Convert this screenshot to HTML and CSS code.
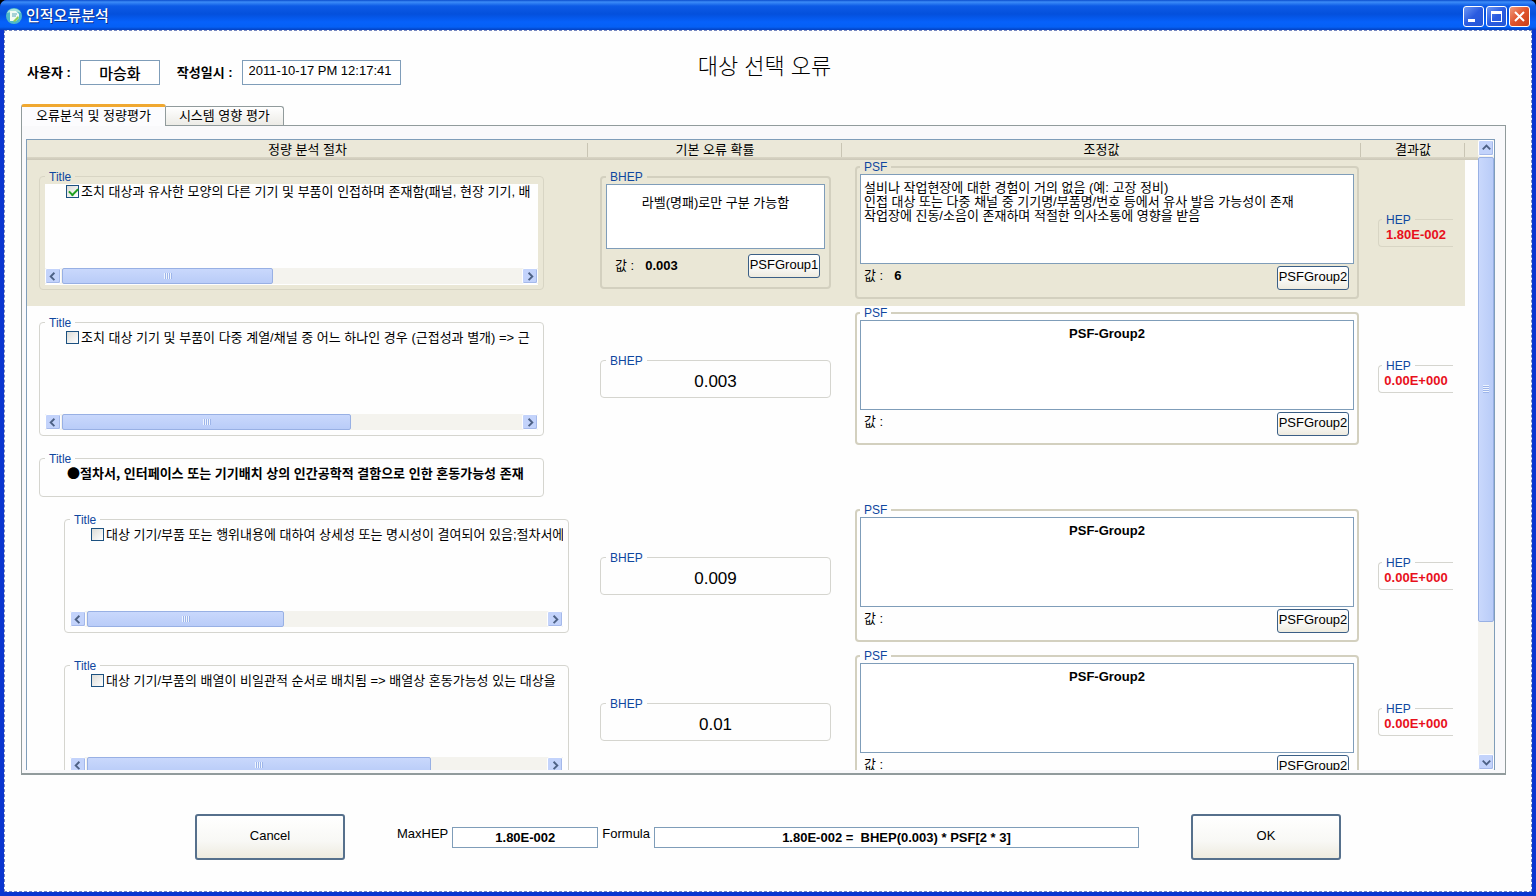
FILE: index.html
```html
<!DOCTYPE html>
<html lang="ko">
<head>
<meta charset="utf-8">
<title>인적오류분석</title>
<link rel="stylesheet" href="styles.css">
</head>
<body>
<div class="window">
  <header class="titlebar">
    <svg class="app-icon" viewBox="0 0 16 16" aria-hidden="true">
      <circle cx="8" cy="8" r="8" fill="#4fb9c9"/>
      <path d="M1 5a8 8 0 0 1 14 0l-6-2z" fill="#a9e3dc"/>
      <path d="M4 3h6l3 3v4l-3 3H4z" fill="#f2fbf4"/>
      <path d="M6 6h5M6 8h4" stroke="#5aa9b8" fill="none"/>
      <path d="M7 13l5-5 1 2-4 4z" fill="#8fcf5a"/>
    </svg>
    <h1 class="titlebar-text">인적오류분석</h1>
    <button class="win-button" aria-label="최소화"><svg viewBox="0 0 19 19"><path d="M4 12h7v3H4z" fill="#fff"/></svg></button>
    <button class="win-button" aria-label="최대화"><svg viewBox="0 0 19 19"><path d="M4 4h11v11H4zM5 7v7h9V7z" fill="#fff" fill-rule="evenodd"/></svg></button>
    <button class="win-button win-close" aria-label="닫기"><svg viewBox="0 0 19 19"><path d="M5 5l9 9M14 5l-9 9" stroke="#fff" stroke-width="2" fill="none"/></svg></button>
  </header>
  <main class="client">
    <div class="info">
      <div class="info-fields">
        <label for="user">사용자 :</label>
        <input id="user" class="box user" value="마승화">
        <label for="date" class="date-label">작성일시 :</label>
        <input id="date" class="box date" value="2011-10-17 PM 12:17:41">
      </div>
      <h2 class="heading">대상 선택 오류</h2>
    </div>
    <div class="tabs" role="tablist">
      <button class="tab tab-active" role="tab" aria-selected="true">오류분석 및 정량평가</button>
      <button class="tab" role="tab" aria-selected="false">시스템 영향 평가</button>
    </div>
    <section class="panel">
      <div class="list">
        <div class="list-view">
          <table class="grid">
            <colgroup><col class="col-title"><col class="col-bhep"><col><col class="col-hep"><col class="col-rest"></colgroup>
            <thead>
              <tr><th>정량 분석 절차</th><th>기본 오류 확률</th><th>조정값</th><th>결과값</th><th></th></tr>
            </thead>
            <tbody>
              <tr class="selected">
                <td class="cell-title">
                  <fieldset class="group title-group"><legend>Title</legend>
                    <div class="scroller">
                      <label class="check"><input type="checkbox" checked>조치 대상과 유사한 모양의 다른 기기 및 부품이 인접하며 존재함(패널, 현장 기기, 배</label>
                      <div class="hbar"><button class="arrow" aria-label="왼쪽"><svg viewBox="0 0 15 15"><path d="M9 4L5 8l4 4"/></svg></button><div class="track"><div class="thumb" style="width:46%"></div></div><button class="arrow" aria-label="오른쪽"><svg viewBox="0 0 15 15"><path d="M6 4l4 4-4 4"/></svg></button></div>
                    </div>
                  </fieldset>
                </td>
                <td class="cell-bhep">
                  <fieldset class="group thick"><legend>BHEP</legend>
                    <textarea class="box note note-bhep" aria-label="BHEP">라벨(명패)로만 구분 가능함</textarea>
                    <div class="value value-bhep"><span>값 :</span><b>0.003</b><button class="button small">PSFGroup1</button></div>
                  </fieldset>
                </td>
                <td class="cell-psf">
                  <fieldset class="group thick psf"><legend>PSF</legend>
                    <textarea class="box note note-psf" aria-label="PSF">설비나 작업현장에 대한 경험이 거의 없음 (예: 고장 정비)
인접 대상 또는 다중 채널 중 기기명/부품명/번호 등에서 유사 발음 가능성이 존재
작업장에 진동/소음이 존재하며 적절한 의사소통에 영향을 받음</textarea>
                    <div class="value"><span>값 :</span><b>6</b><button class="button small">PSFGroup2</button></div>
                  </fieldset>
                </td>
                <td class="cell-hep"><fieldset class="group hep"><legend>HEP</legend>1.80E-002</fieldset></td>
              </tr>
              <tr>
                <td class="cell-title">
                  <fieldset class="group title-group"><legend>Title</legend>
                    <div class="scroller">
                      <label class="check"><input type="checkbox">조치 대상 기기 및 부품이 다중 계열/채널 중 어느 하나인 경우 (근접성과 별개) =&gt; 근</label>
                      <div class="hbar"><button class="arrow" aria-label="왼쪽"><svg viewBox="0 0 15 15"><path d="M9 4L5 8l4 4"/></svg></button><div class="track"><div class="thumb" style="width:63%"></div></div><button class="arrow" aria-label="오른쪽"><svg viewBox="0 0 15 15"><path d="M6 4l4 4-4 4"/></svg></button></div>
                    </div>
                  </fieldset>
                </td>
                <td class="cell-bhep"><fieldset class="group number"><legend>BHEP</legend>0.003</fieldset></td>
                <td class="cell-psf">
                  <fieldset class="group thick psf"><legend>PSF</legend>
                    <textarea class="box note note-psf note-empty" aria-label="PSF">PSF-Group2</textarea>
                    <div class="value"><span>값 :</span><button class="button small">PSFGroup2</button></div>
                  </fieldset>
                </td>
                <td class="cell-hep"><fieldset class="group hep"><legend>HEP</legend>0.00E+000</fieldset></td>
              </tr>
              <tr class="short">
                <td class="cell-title"><fieldset class="group section"><legend>Title</legend>●절차서, 인터페이스 또는 기기배치 상의 인간공학적 결함으로 인한 혼동가능성 존재</fieldset></td>
                <td></td><td></td><td></td>
              </tr>
              <tr>
                <td class="cell-title nested">
                  <fieldset class="group title-group"><legend>Title</legend>
                    <div class="scroller">
                      <label class="check"><input type="checkbox">대상 기기/부품 또는 행위내용에 대하여 상세성 또는 명시성이 결여되어 있음;절차서에</label>
                      <div class="hbar"><button class="arrow" aria-label="왼쪽"><svg viewBox="0 0 15 15"><path d="M9 4L5 8l4 4"/></svg></button><div class="track"><div class="thumb" style="width:43%"></div></div><button class="arrow" aria-label="오른쪽"><svg viewBox="0 0 15 15"><path d="M6 4l4 4-4 4"/></svg></button></div>
                    </div>
                  </fieldset>
                </td>
                <td class="cell-bhep"><fieldset class="group number"><legend>BHEP</legend>0.009</fieldset></td>
                <td class="cell-psf">
                  <fieldset class="group thick psf"><legend>PSF</legend>
                    <textarea class="box note note-psf note-empty" aria-label="PSF">PSF-Group2</textarea>
                    <div class="value"><span>값 :</span><button class="button small">PSFGroup2</button></div>
                  </fieldset>
                </td>
                <td class="cell-hep"><fieldset class="group hep"><legend>HEP</legend>0.00E+000</fieldset></td>
              </tr>
              <tr>
                <td class="cell-title nested">
                  <fieldset class="group title-group"><legend>Title</legend>
                    <div class="scroller">
                      <label class="check"><input type="checkbox">대상 기기/부품의 배열이 비일관적 순서로 배치됨 =&gt; 배열상 혼동가능성 있는 대상을</label>
                      <div class="hbar"><button class="arrow" aria-label="왼쪽"><svg viewBox="0 0 15 15"><path d="M9 4L5 8l4 4"/></svg></button><div class="track"><div class="thumb" style="width:75%"></div></div><button class="arrow" aria-label="오른쪽"><svg viewBox="0 0 15 15"><path d="M6 4l4 4-4 4"/></svg></button></div>
                    </div>
                  </fieldset>
                </td>
                <td class="cell-bhep"><fieldset class="group number"><legend>BHEP</legend>0.01</fieldset></td>
                <td class="cell-psf">
                  <fieldset class="group thick psf"><legend>PSF</legend>
                    <textarea class="box note note-psf note-empty" aria-label="PSF">PSF-Group2</textarea>
                    <div class="value"><span>값 :</span><button class="button small">PSFGroup2</button></div>
                  </fieldset>
                </td>
                <td class="cell-hep"><fieldset class="group hep"><legend>HEP</legend>0.00E+000</fieldset></td>
              </tr>
            </tbody>
          </table>
        </div>
        <div class="vbar">
          <button class="arrow" aria-label="위"><svg viewBox="0 0 15 15"><path d="M4 9l4-4 4 4"/></svg></button>
          <div class="track"><div class="thumb" style="height:78%"></div></div>
          <button class="arrow" aria-label="아래"><svg viewBox="0 0 15 15"><path d="M4 6l4 4 4-4"/></svg></button>
        </div>
      </div>
    </section>
    <footer class="footer">
      <button class="button large">Cancel</button>
      <div class="result">
        <label for="maxhep">MaxHEP</label>
        <input id="maxhep" class="box out maxhep" value="1.80E-002">
        <label for="formula">Formula</label>
        <input id="formula" class="box out formula" value="1.80E-002 =  BHEP(0.003) * PSF[2 * 3]">
      </div>
      <button class="button large">OK</button>
    </footer>
  </main>
</div>
</body>
</html>
```
FILE: styles.css
```css
* { box-sizing: border-box; }
body {
  margin: 0;
  background: #000;
  color: #000;
  font: 13px/14px "Liberation Sans", "Noto Sans CJK KR", sans-serif;
}
button, input, textarea { font: inherit; color: inherit; margin: 0; }
button { padding: 0; }
h1, h2 { margin: 0; }

.window {
  display: flex;
  flex-direction: column;
  height: 100vh;
  padding: 0 4px 4px;
  background: #0a36d0;
  border-radius: 7px 7px 0 0;
  overflow: hidden;
}
.titlebar {
  display: flex;
  align-items: center;
  gap: 2px;
  height: 30px;
  flex: none;
  margin: 0 -4px;
  padding: 2px 6px 0;
  background: linear-gradient(#0a4ccd 0, #3c8cf8 2px, #0d5be6 6px, #0450dc 14px, #0661fb 22px, #0560f5 27px, #0340c0 30px);
}
.app-icon { width: 16px; height: 16px; }
.titlebar-text {
  flex: 1;
  padding-left: 2px;
  color: #fff;
  font-size: 15px;
  line-height: 20px;
  font-weight: 500;
  text-shadow: 1px 1px #0b2d8c;
}
.win-button {
  width: 21px;
  height: 21px;
  border: 1px solid #fff;
  border-radius: 3px;
  background: linear-gradient(135deg, #6d97f4, #2a5be0 50%, #2557d6);
}
.win-button svg { display: block; width: 19px; height: 19px; }
.win-close { background: linear-gradient(135deg, #f09a7c, #e0532c 50%, #c93f18); }

.client {
  flex: 1;
  min-height: 0;
  display: flex;
  flex-direction: column;
  padding: 29px 25px 31px 16px;
  background: #fefefe;
  border: 1px dashed #7687c0;
}
.box {
  border: 1px solid #7f9db9;
  border-radius: 0;
  background: #fff;
  outline: none;
  padding: 0;
}
.info {
  display: grid;
  grid-template-columns: 1fr auto 1fr;
  align-items: start;
  padding-left: 6px;
}
.info-fields {
  display: flex;
  align-items: center;
  gap: 9px;
  font-weight: 700;
}
.info-fields .box { height: 25px; }
.user { width: 80px; font-size: 15px; font-weight: 500; text-align: center; }
.date { width: 159px; font-weight: 400; padding: 0 6px 4px; }
.date-label { margin-left: 8px; }
.heading { padding-right: 4px; font-size: 22px; line-height: 14px; font-weight: 300; }

.tabs { display: flex; align-items: flex-end; margin-top: 19px; }
.tab {
  height: 19px;
  padding: 0 13px;
  border: 1px solid #919b9c;
  border-bottom: 0;
  border-left: 0;
  border-radius: 0 3px 0 0;
  background: linear-gradient(#fff, #ecebe6);
}
.tab-active {
  height: 22px;
  margin-bottom: -1px;
  padding: 0 14px 1px;
  border: 1px solid #919b9c;
  border-top: 3px solid #f0a830;
  border-bottom: 0;
  border-radius: 3px 3px 0 0;
  background: #fcfcfe;
  z-index: 1;
}
.panel {
  flex: 1;
  min-height: 0;
  display: flex;
  padding: 13px 10px 3px 4px;
  border: 1px solid #919b9c;
  border-bottom-width: 2px;
  background: #f9f9fb;
}
.list {
  flex: 1;
  min-width: 0;
  display: flex;
  border: 1px solid #7f9db9;
  border-bottom: 0;
  background: #fefefe;
}
.list-view { flex: 1; min-width: 0; overflow: hidden; }

.grid { width: 100%; table-layout: fixed; border-collapse: separate; border-spacing: 0; }
.col-title { width: 561px; }
.col-bhep { width: 254px; }
.col-hep { width: 104px; }
.col-rest { width: 13px; }
.grid th {
  height: 20px;
  padding: 0;
  font-weight: 400;
  background:
    linear-gradient(#c9c5b4, #c9c5b4) right 3px / 1px 14px no-repeat,
    linear-gradient(#ebe8d9 0, #ebe8d9 17px, #dad6c5 17px, #cbc7b8 20px);
}
.grid th:last-child { background: linear-gradient(#ebe8d9 0, #ebe8d9 17px, #dad6c5 17px, #cbc7b8 20px); }
.grid td { height: 146px; padding: 0; vertical-align: middle; }
.grid .short td { height: 51px; }
.selected td { background: #eae7d6; }
.grid .cell-title { padding: 0 44px 0 12px; }
.grid .nested { padding: 0 19px 0 37px; }
.grid .cell-bhep { padding: 0 11px 0 12px; }
.grid .cell-psf { padding: 0 2px 0 13px; }
.grid .cell-hep { padding: 0 12px 0 17px; }

.group {
  min-width: 0;
  margin: 0 0 6px;
  padding: 0 5px;
  border: 1px solid #d5d5cf;
  border-radius: 4px;
}
.group legend {
  padding: 0 4px;
  line-height: 12px;
  margin-bottom: 1px;
  color: #0f479f;
  font-family: "Liberation Sans", sans-serif;
  font-weight: 400;
  font-size: 12px;
  text-align: left;
}
.thick { border: 2px solid #d3d0bf; padding: 0 4px; }
.psf { padding: 0 3px; }
.title-group { padding-bottom: 4px; }
.selected .title-group, .selected .hep { border-color: #d8d5c4; }
.section { height: 44px; font-family: "Noto Sans CJK KR", sans-serif; font-weight: 700; white-space: nowrap; padding-left: 27px; }
.section legend { margin-left: -22px; }
.number { height: 43px; font-size: 17px; line-height: 28px; text-align: center; }
.hep {
  height: 33px;
  border-right: 0;
  border-radius: 4px 0 0 4px;
  padding: 0 3px;
  color: #e8101c;
  font-weight: 700;
  line-height: 15px;
  text-align: center;
  white-space: nowrap;
}

.scroller {
  display: flex;
  flex-direction: column;
  justify-content: space-between;
  height: 101px;
  background: #fefefe;
  overflow: hidden;
}
.check { display: flex; align-items: center; gap: 2px; height: 16px; padding-left: 21px; white-space: nowrap; overflow: hidden; }
.check input {
  appearance: none;
  flex: none;
  width: 13px;
  height: 13px;
  border: 1px solid #1c5180;
  background: linear-gradient(135deg, #dcdcd7, #fff);
}
.check input:checked::after {
  content: "";
  display: block;
  width: 7px;
  height: 4px;
  margin: 2px;
  border: solid #21a121;
  border-width: 0 0 2px 2px;
  transform: rotate(-45deg);
}
.hbar { display: flex; height: 16px; background: #f4f3ee; }
.title-group .hbar { margin-bottom: 1px; }
.arrow {
  flex: none;
  width: 16px;
  height: 16px;
  border: 1px solid #fff;
  border-radius: 2px;
  background: #c3d3fb;
  box-shadow: inset -1px -1px #a5b9ea;
}
.arrow svg { display: block; width: 14px; height: 14px; fill: none; stroke: #4d6185; stroke-width: 2; }
.track { flex: 1; min-width: 0; min-height: 0; display: flex; padding: 0 1px; }
.thumb {
  border: 1px solid #98b0e4;
  border-radius: 2px;
  background:
    repeating-linear-gradient(90deg, #eef4fe 0, #eef4fe 1px, #9db5ea 1px, #9db5ea 2px) center / 8px 6px no-repeat,
    linear-gradient(#c9d8fc, #b9ccf8);
}
.vbar { display: flex; flex-direction: column; width: 16px; background: #f4f3ee; }
.vbar .track { padding: 1px 0; }
.vbar .thumb {
  width: 100%;
  background:
    repeating-linear-gradient(#eef4fe 0, #eef4fe 1px, #9db5ea 1px, #9db5ea 2px) center / 6px 8px no-repeat,
    linear-gradient(90deg, #c9d8fc, #b9ccf8);
}

.note { display: block; width: 100%; resize: none; overflow: hidden; line-height: 14px; }
.note-bhep { height: 65px; padding: 11px 4px; text-align: center; }
.note-psf { height: 90px; padding: 6px 3px; }
.note-empty { font-weight: 700; text-align: center; }
.value {
  display: flex;
  align-items: flex-start;
  gap: 11px;
  height: 33px;
  padding: 2px 5px 0 4px;
  line-height: 20px;
}
.value .button { margin-left: auto; }
.value-bhep { height: 38px; padding: 5px 5px 0 9px; line-height: 24px; }
.button {
  border: 1px solid #3b5f86;
  border-radius: 3px;
  background: linear-gradient(#fff, #f8f8f5 60%, #eeebdf);
}
.small { width: 72px; height: 24px; padding-bottom: 3px; line-height: 20px; white-space: nowrap; }
.large { width: 150px; height: 46px; flex: none; padding-bottom: 2px; border-width: 2px; border-color: #56708c; }

.footer {
  display: flex;
  align-items: center;
  gap: 52px;
  margin-top: 39px;
  padding: 0 165px 0 174px;
}
.result { flex: 1; min-width: 0; display: flex; align-items: flex-start; gap: 4px; }
.out { height: 21px; font-weight: 700; text-align: center; white-space: pre; }
.maxhep { width: 146px; }
.formula { flex: 1; min-width: 0; }
```
